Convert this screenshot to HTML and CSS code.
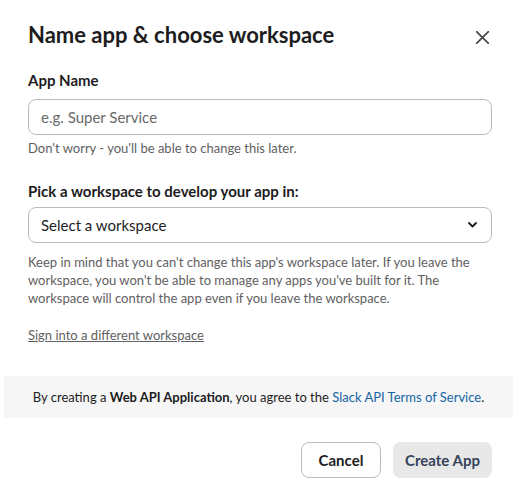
FILE: index.html
```html
<!DOCTYPE html>
<html lang="en">
<head>
<meta charset="utf-8">
<title>Name app &amp; choose workspace</title>
<link rel="stylesheet" href="styles.css">
</head>
<body>
<div class="dialog">
  <header class="head">
    <h1 class="title">Name app &amp; choose workspace</h1>
    <button class="close" aria-label="Close">
      <svg width="13" height="13" viewBox="0 0 13 13"><path d="M0.5 0.5 L12.5 12.5 M12.5 0.5 L0.5 12.5" stroke="#454245" stroke-width="1.6" fill="none" stroke-linecap="round"/></svg>
    </button>
  </header>
  <div class="body">
    <label class="label label-name">App Name</label>
    <input class="field field-name" type="text" placeholder="e.g. Super Service">
    <p class="hint hint-name">Don't worry - you'll be able to change this later.</p>
    <label class="label label-ws">Pick a workspace to develop your app in:</label>
    <div class="field select">
      <span class="select-text">Select a workspace</span>
      <svg class="chev" width="9" height="6" viewBox="0 0 9 6"><path d="M1 1 L4.5 4.5 L8 1" stroke="#1d1c1d" stroke-width="1.8" fill="none" stroke-linecap="round" stroke-linejoin="round"/></svg>
    </div>
    <p class="hint hint-ws">Keep in mind that you can't change this app's workspace later. If you leave the workspace, you won't be able to manage any apps you've built for it. The workspace will control the app even if you leave the workspace.</p>
    <a class="switch" href="#">Sign into a different workspace</a>
  </div>
  <div class="terms">By creating a&nbsp;<b>Web API Application</b>, you agree to the&nbsp;<a href="#">Slack API Terms of Service</a>.</div>
  <div class="actions">
    <button class="btn btn-cancel">Cancel</button>
    <button class="btn btn-create">Create App</button>
  </div>
</div>
</body>
</html>
```
FILE: styles.css
```css
* { box-sizing: border-box; }
html, body { margin: 0; padding: 0; background: #ffffff; }
body {
  font-family: Lato, "Noto Sans", sans-serif;
  color: #1d1c1d;
  width: 517px;
  height: 501px;
  overflow: hidden;
}
.dialog {
  width: 517px;
  height: 501px;
  background: #ffffff;
  border-radius: 8px;
}
.head {
  display: flex;
  align-items: flex-start;
  justify-content: space-between;
  padding: 22px 25px 0 28px;
}
.title {
  margin: 0;
  font-size: 22px;
  font-weight: 700;
  line-height: 26px;
  color: #1d1c1d;
}
.close {
  border: 0;
  background: none;
  padding: 0;
  margin: 9px 3px 0 0;
  width: 13px;
  height: 13px;
  display: flex;
  cursor: pointer;
}
.body {
  display: flex;
  flex-direction: column;
  align-items: flex-start;
  padding: 0 25px 0 28px;
}
.label {
  display: block;
  font-size: 15px;
  font-weight: 700;
  line-height: 18px;
  color: #1d1c1d;
}
.label-name { margin-top: 23px; }
.label-ws { margin-top: 25px; }
.field {
  width: 464px;
  height: 36px;
  border: 1px solid #bcbcbc;
  border-radius: 8px;
  background: #fff;
  font-family: Lato, "Noto Sans", sans-serif;
  font-size: 15px;
  color: #1d1c1d;
  padding: 0 12px;
}
.field-name { margin-top: 10px; outline: none; }
.field-name::placeholder { color: #696969; }
.select {
  margin-top: 7px;
  display: flex;
  align-items: center;
  justify-content: space-between;
}
.select-text { color: #1d1c1d; }
.chev { margin-right: 2px; }
.hint {
  margin: 0;
  font-size: 13px;
  line-height: 18px;
  color: #616061;
}
.hint-name { margin-top: 4px; }
.hint-ws { margin-top: 10px; width: 464px; }
.switch {
  margin-top: 19px;
  font-size: 13px;
  line-height: 18px;
  color: #616061;
  text-decoration: underline;
}
.terms {
  margin: 32px 4px 0;
  height: 42px;
  background: #f6f6f6;
  display: flex;
  align-items: center;
  justify-content: center;
  font-size: 13px;
  color: #1d1c1d;
  white-space: pre;
}
.terms b { font-weight: 700; }
.terms a { color: #1264a3; text-decoration: none; }
.actions {
  display: flex;
  justify-content: flex-end;
  gap: 12px;
  padding: 24px 25px 0 28px;
}
.btn {
  height: 36px;
  border-radius: 8px;
  font-family: Lato, "Noto Sans", sans-serif;
  font-size: 15px;
  font-weight: 700;
  padding: 0;
  white-space: nowrap;
  cursor: pointer;
}
.btn-cancel {
  width: 80px;
  background: #fff;
  border: 1px solid #bcbcbc;
  color: #1d1c1d;
}
.btn-create {
  width: 99px;
  background: #e8e8e8;
  border: 0;
  color: #36435a;
}
```
